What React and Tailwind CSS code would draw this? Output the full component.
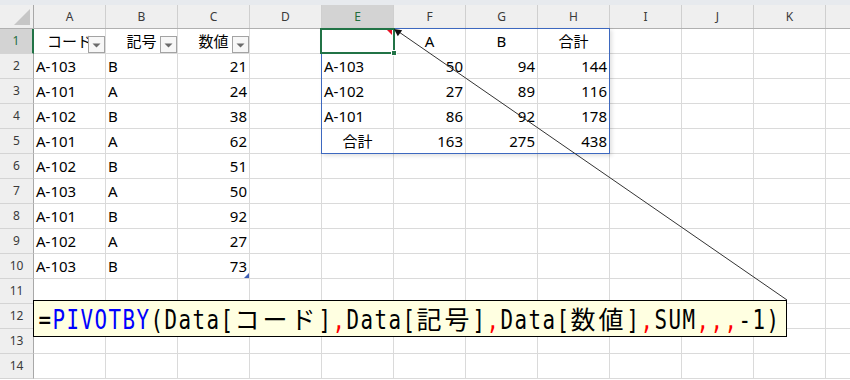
import React from 'react';

const COLS = ['A', 'B', 'C', 'D', 'E', 'F', 'G', 'H', 'I', 'J', 'K', 'L'];

const DATA = [
  ['A-103', 'B', '21'],
  ['A-101', 'A', '24'],
  ['A-102', 'B', '38'],
  ['A-101', 'A', '62'],
  ['A-102', 'B', '51'],
  ['A-103', 'A', '50'],
  ['A-101', 'B', '92'],
  ['A-102', 'A', '27'],
  ['A-103', 'B', '73'],
];

const PIVOT = [
  ['', 'A', 'B', '合計'],
  ['A-103', '50', '94', '144'],
  ['A-102', '27', '89', '116'],
  ['A-101', '86', '92', '178'],
  ['合計', '163', '275', '438'],
];

const JUSTIFY = { l: 'justify-start', r: 'justify-end', c: 'justify-center' };

function getCell(r, c) {
  if (r === 1 && c <= 2) {
    return { t: ['コード', '記号', '数値'][c], a: 'c', dd: true };
  }
  if (r >= 2 && r <= 10 && c <= 2) {
    return { t: DATA[r - 2][c], a: c === 2 ? 'r' : 'l', corner: r === 10 && c === 2 };
  }
  if (r >= 1 && r <= 5 && c >= 4 && c <= 7) {
    const v = PIVOT[r - 1][c - 4];
    let a = 'r';
    if (r === 1) a = 'c';
    else if (c === 4) a = r === 5 ? 'c' : 'l';
    return { t: v, a };
  }
  return { t: '', a: 'l' };
}

function Dropdown() {
  return (
    <div className="absolute right-0 bottom-0 w-[17px] h-[17px] border border-[#a3a3a3] bg-[#f7f7f7] flex items-center justify-center">
      <svg width="9" height="5" viewBox="0 0 9 5" className="mt-[2px]">
        <polygon points="0.5,0.5 8.5,0.5 4.5,4.5" fill="#6b6b6b" />
      </svg>
    </div>
  );
}

function Cell({ r, c }) {
  const cell = getCell(r, c);
  return (
    <div
      className={`relative shrink-0 w-[72px] h-full border-r border-b border-[#dadada] flex items-center px-[2px] pt-[1px] text-[15px] text-black whitespace-nowrap overflow-visible ${JUSTIFY[cell.a]}`}
    >
      <span className="relative">{cell.t}</span>
      {cell.dd && <Dropdown />}
      {cell.corner && (
        <svg width="5" height="5" viewBox="0 0 5 5" className="absolute right-0 bottom-0">
          <polygon points="5,0 5,5 0,5" fill="#3f5fb5" />
        </svg>
      )}
    </div>
  );
}

function RowHeader({ r }) {
  const sel = r === 1;
  return (
    <div
      className={`shrink-0 w-[34px] h-full border-b border-[#d4d4d4] flex items-center justify-center text-[12px] ${
        sel
          ? 'bg-[#d3d3d3] text-[#1f6e3c] border-r-2 border-r-[#217346]'
          : 'bg-[#efefef] text-[#3a3a3a] border-r border-r-[#a8a8a8]'
      }`}
    >
      {r}
    </div>
  );
}

const SEGMENTS = [
  ['=', 'k'],
  ['PIVOTBY', 'b'],
  ['(Data[コード]', 'k'],
  [',', 'r'],
  ['Data[記号]', 'k'],
  [',', 'r'],
  ['Data[数値]', 'k'],
  [',', 'r'],
  ['SUM', 'k'],
  [',,,', 'r'],
  ['-1)', 'k'],
];

const COLOR = { k: 'text-black', b: 'text-[#0000ff]', r: 'text-[#ff0000]' };

function Formula() {
  const chars = [];
  SEGMENTS.forEach(([s, col], si) => {
    Array.from(s).forEach((ch, ci) => {
      const wide = ch.charCodeAt(0) > 0x2e80;
      chars.push(
        <span
          key={`${si}-${ci}`}
          className={`inline-block text-center ${COLOR[col]} ${
            wide ? 'w-[28px] text-[25px]' : 'w-[14px] text-[26px]'
          }`}
        >
          <span className={wide ? 'inline-block' : 'inline-block scale-x-[0.8]'}>{ch}</span>
        </span>
      );
    });
  });
  return (
    <div className="flex items-center leading-none whitespace-nowrap pl-[3px] pt-[3px] font-['DejaVu_Sans_Mono','Noto_Sans_CJK_JP',monospace]">
      {chars}
    </div>
  );
}

export default function App() {
  const rows = Array.from({ length: 14 }, (_, i) => i + 1);
  return (
    <div className="relative w-[850px] h-[380px] overflow-hidden bg-white font-['Noto_Sans','Noto_Sans_CJK_JP',sans-serif]">
      <div className="h-[5px] bg-[#e7eaee]" />
      <div className="flex h-[24px] bg-[#efefef] border-b border-[#b0b0b0]">
        <div className="shrink-0 w-[34px] h-full border-r border-[#a8a8a8] flex items-end justify-end pr-[3px] pb-[3px]">
          <svg width="16" height="16" viewBox="0 0 16 16">
            <polygon points="16,0 16,16 0,16" fill="#c6c6c6" />
          </svg>
        </div>
        {COLS.map((c) => (
          <div
            key={c}
            className={`shrink-0 w-[72px] h-full border-r border-[#cfcfcf] flex items-center justify-center text-[12px] ${
              c === 'E' ? 'bg-[#d3d3d3] text-[#1f6e3c]' : 'text-[#3a3a3a]'
            }`}
          >
            {c === 'L' ? '' : c}
          </div>
        ))}
      </div>
      {rows.map((r) => (
        <div key={r} className="flex h-[25px]">
          <RowHeader r={r} />
          {COLS.map((c, ci) => (
            <Cell key={c} r={r} c={ci} />
          ))}
        </div>
      ))}

      {/* spill range border */}
      <div className="absolute left-[321px] top-[28px] w-[289px] h-[126px] border border-[#3d68bf] shadow-[2px_2px_4px_rgba(0,0,0,0.12)] pointer-events-none" />

      {/* active cell E1 */}
      <div className="absolute left-[320px] top-[28px] w-[75px] h-[26px] border-2 border-[#217346] pointer-events-none">
        <svg width="5" height="5" viewBox="0 0 5 5" className="absolute right-[1px] top-[0px]">
          <polygon points="0,0 5,0 5,5" fill="#e81123" />
        </svg>
        <div className="absolute right-[-4px] bottom-[-4px] w-[6px] h-[6px] bg-[#217346] border border-white" />
      </div>

      {/* connector line */}
      <svg className="absolute left-0 top-0 pointer-events-none" width="850" height="380" viewBox="0 0 850 380">
        <line x1="399" y1="32" x2="787" y2="300" stroke="#333" strokeWidth="1" />
        <polygon points="394,29 402.2,30.2 397.8,36.2" fill="#111" />
      </svg>

      {/* formula callout */}
      <div className="absolute left-[33px] top-[300px] w-[754px] h-[37px] border border-black bg-[#ffffe1] flex items-center">
        <Formula />
      </div>
    </div>
  );
}
